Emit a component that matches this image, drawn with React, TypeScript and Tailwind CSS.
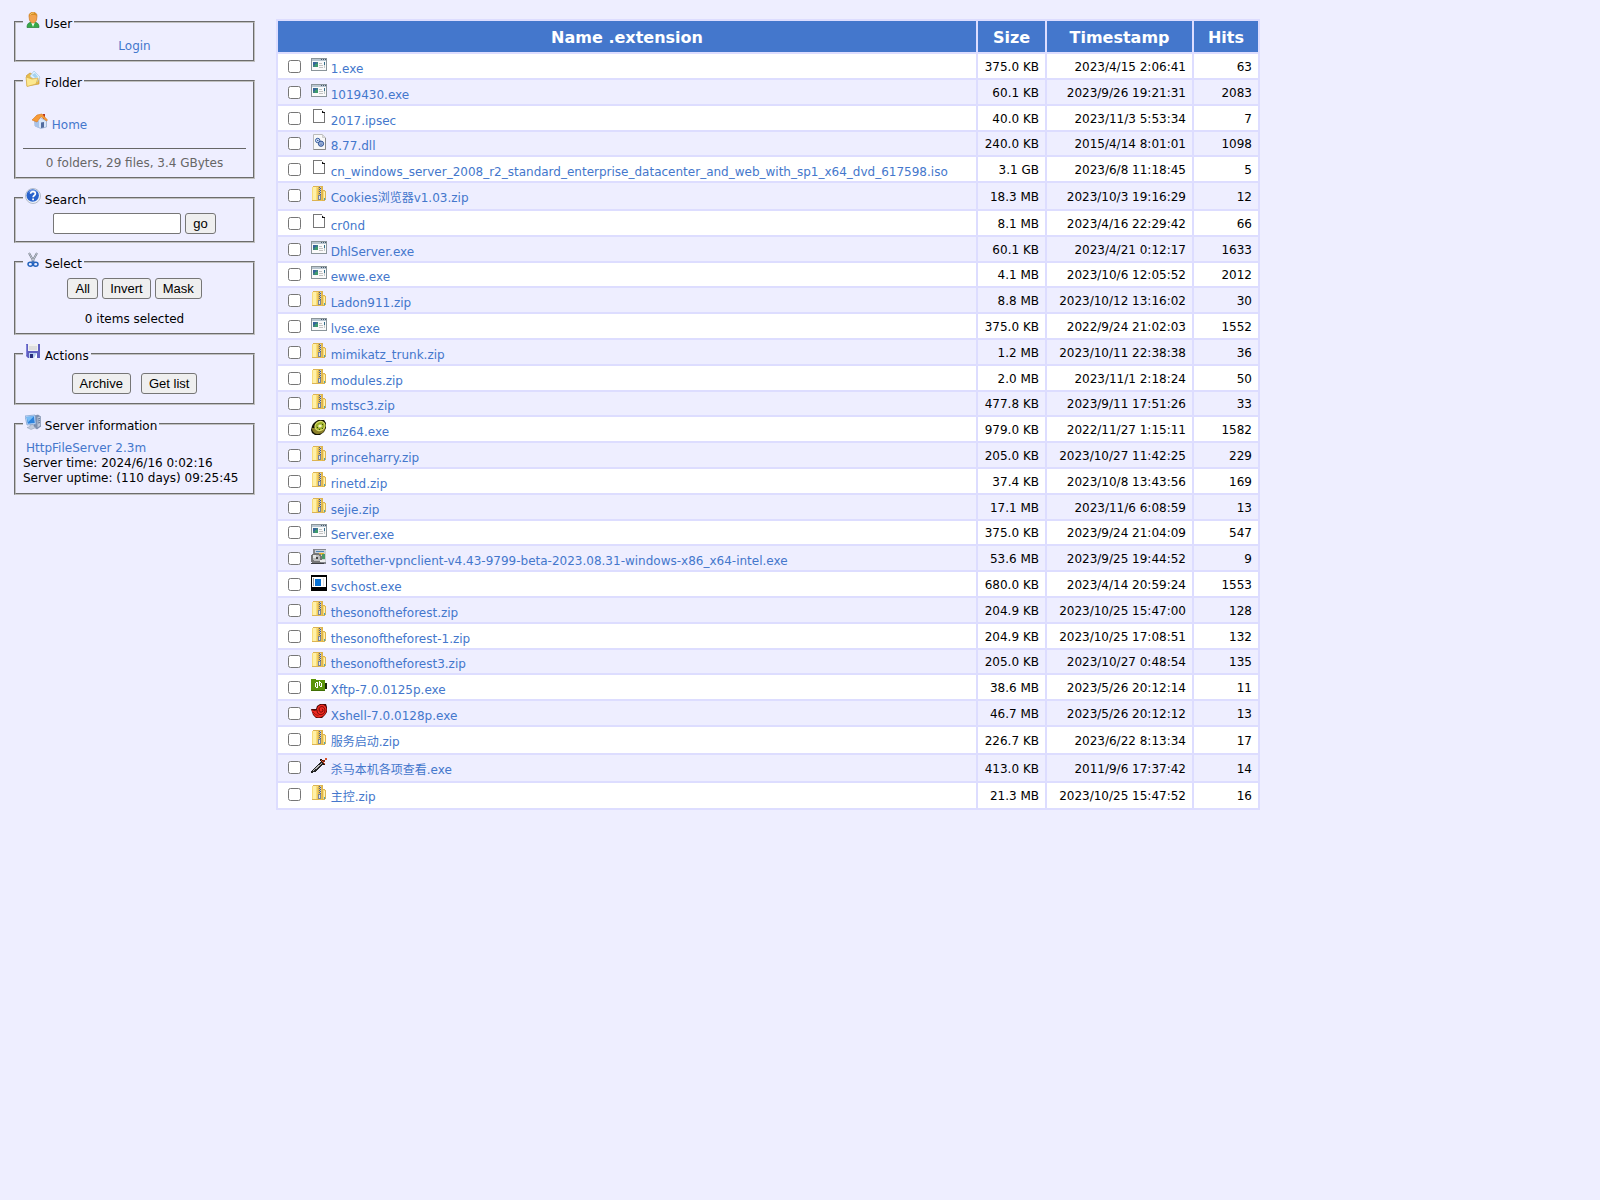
import { useState, type ReactNode } from "react";

type IconName =
  | "exe"
  | "file"
  | "dll"
  | "zip"
  | "kiwi"
  | "setup"
  | "console"
  | "xftp"
  | "xshell"
  | "sword"
  | "user"
  | "folder"
  | "home"
  | "search"
  | "select"
  | "actions"
  | "server";

const shapes: Record<IconName, ReactNode> = {
  exe: (
    <g shapeRendering="crispEdges">
      <path d="M0 1h16v13H0z" fill="#8a9499" />
      <path d="M1 2h14v2H1z" fill="#b9c6d0" />
      <path d="M10 2h1v1h-1zM12 2h1v1h-1zM14 2h1v1h-1z" fill="#46586a" />
      <path d="M1 4h14v9H1z" fill="#fafafa" />
      <path d="M2 5h5v5H2z" fill="#3d7f86" />
      <path d="M2 5h3v3H2z" fill="#37649a" />
      <path d="M4 7h3v3H4z" fill="#3f9a6c" />
      <path d="M8 6h3v1H8zM8 8h4v1H8zM8 10h4v1H8z" fill="#c3c3c3" />
      <path d="M13 5h1v3h-1z" fill="#336d88" />
      <path d="M13 8h1v3h-1z" fill="#c5cdcd" />
    </g>
  ),
  file: (
    <g shapeRendering="crispEdges">
      <path d="M2 0h9v1h1v1h1v1h1v11H2z" fill="#777" />
      <path d="M3 1h8v3h2v9H3z" fill="#fff" />
      <path d="M11 1h1v1h-1zM12 2h1v1h-1z" fill="#ddd" />
      <path d="M11 2h1v1h2v1h-3z" fill="#111" />
    </g>
  ),
  dll: (
    <>
      <path d="M2.5.5h9l3 3v12h-12z" fill="#f8f8f8" stroke="#bbb" />
      <path d="M14.5 4v11.5h-12" fill="none" stroke="#888" />
      <path d="M11.5.5v3h3" fill="#ddd" stroke="#ccc" />
      <circle cx="6.7" cy="6.5" r="2.2" fill="#dce8fb" stroke="#335a9c" />
      <circle cx="10" cy="9.7" r="2.6" fill="#a9c3ee" stroke="#2b4c8c" />
      <circle cx="6.7" cy="6.5" r=".8" fill="#335a9c" />
      <circle cx="10" cy="9.7" r=".9" fill="#fff" stroke="#2b4c8c" strokeWidth=".6" />
    </>
  ),
  zip: (
    <g shapeRendering="crispEdges">
      <path d="M1 1h1V0h10v4h2v1h1v9h-1v1H1z" fill="#dcb352" />
      <path d="M1 1h6v13H1z" fill="#f8dd7a" />
      <path d="M2 1h3v13H2z" fill="#fff0a6" />
      <path d="M6 2h1v12H6z" fill="#f2cc58" />
      <path d="M8 1h3v14H8z" fill="#e9c04b" />
      <path d="M12 5h2v9h-2z" fill="#f9dd75" />
      <path d="M13 6h1v7h-1z" fill="#fff2b4" />
      <path d="M8 1h1v1H8zM8 3h1v1H8zM8 5h1v1H8zM8 7h1v1H8zM9 2h1v1H9zM9 4h1v1H9zM9 6h1v1H9zM9 8h1v1H9z" fill="#4f5f86" />
      <path d="M9 1h1v1H9zM9 3h1v1H9zM9 5h1v1H9zM9 7h1v1H9z" fill="#c3cde0" />
      <path d="M7 9h3v5H7z" fill="#7a849b" />
      <path d="M8 10h1v3H8z" fill="#e0e5ee" />
      <path d="M13 12h1v2h-1z" fill="#4aa3b5" />
    </g>
  ),
  kiwi: (
    <>
      <path d="m2 4 2-2 3-2h6l2 3v5l-2 4-4 3H4l-3-2-1-3 1-4z" fill="#141404" />
      <path d="M1 8c0 4 3 6 6 6 4 0 7-3 7-6z" fill="#8c8129" />
      <ellipse cx="9" cy="6" rx="5.7" ry="5" fill="#d9dc6a" transform="rotate(-25 9 6)" />
      <ellipse cx="9" cy="6" rx="4.5" ry="3.7" fill="#9aae27" transform="rotate(-25 9 6)" />
      <ellipse cx="9" cy="6" rx="2.5" ry="1.8" fill="#c4cf62" transform="rotate(-25 9 6)" />
      <ellipse cx="9" cy="6" rx="1.5" ry="1" fill="#f8f6d0" />
      <path d="M6 7h1v1H6zM11 4h1v1h-1zM8 9h1v1H8zM11 8h1v1h-1z" fill="#3c4b10" />
    </>
  ),
  setup: (
    <g shapeRendering="crispEdges">
      <path d="M2 0h13v15H2z" fill="#85868c" />
      <path d="M4 1h11v12H4z" fill="#cdd0d6" />
      <path d="M5 2h8v1H5z" fill="#4a84b8" />
      <path d="M8 4h5v2H8z" fill="#e6b52f" />
      <path d="M11 5h3v5h-3z" fill="#4b9868" />
      <path d="M0 6h1V5h2V4h5v1h2v2h1v5h-1v2H1v-1H0z" fill="#777" />
      <path d="M2 6h6v1h1v5H3v-1H2z" fill="#bdbdbd" />
      <path d="M2 6h3v3H2z" fill="#e4e4e4" />
      <path d="M5 8h2v2H5z" fill="#444" />
      <path d="M0 14h13v1H0z" fill="#3d3f44" />
      <path d="M9 11h5v2H9z" fill="#eee" />
    </g>
  ),
  console: (
    <g shapeRendering="crispEdges">
      <path d="M0 0h16v16H0z" fill="#000" />
      <path d="M1 2h14v10H1z" fill="#fff" />
      <path d="M2 3h1v8H2z" fill="#999" />
      <path d="M4 4h6v7H4z" fill="#0872d4" />
      <path d="M12 3h1v8h-1z" fill="#ddd" />
    </g>
  ),
  xftp: (
    <g shapeRendering="crispEdges">
      <path d="M0 1h5v1h9v11H0z" fill="#5a9408" />
      <path d="M0 12h14v1H0z" fill="#406f05" />
      <path d="M14 5h2v6h-2z" fill="#16240a" />
      <path d="M5 4h2v1H5zM4 5h1v4H4zM5 9h1v1H5zM6 5h1v5H6zM8 3h1v5H8zM9 8h1v1H9zM9 4h1v1H9zM10 5h1v4h-1z" fill="#fff" />
    </g>
  ),
  xshell: (
    <>
      <path d="M0 5h5l1-3 3-2h6l1 3v5l-2 3-3 3H5l-3-3z" fill="#4d0805" />
      <path d="M.5 6c2 1 4 1 5.500 0C6 3 8 .7 11 .7S15.500 3 15.500 6 12 13.500 7.500 13.500C4 13.500 2 10 .5 6z" fill="#f02a22" />
      <path d="M6 6c0 3.500 2 5 4.500 4.500C13.500 10 14.500 7 13.500 4.500 12.500 2 9 2 8.200 4.500 7.700 7 9 8.500 10.800 8 12.500 7.500 12.300 5 10.800 5" fill="none" stroke="#6e0906" />
      <path d="M2 8c1.500 2 3 3 5.500 3.500" fill="none" stroke="#7c0c08" strokeWidth=".7" />
    </>
  ),
  sword: (
    <g shapeRendering="crispEdges">
      <path d="m0 15 1-3 9-8 2 2-8 8z" fill="#252525" />
      <path d="m2 13 9-8" stroke="#b5b5b5" />
      <path d="M9 1h2v1h1v1h1v2h1v2h-2V5h-1V4h-1V3H9z" fill="#2a1410" />
      <path d="M10 2h1v1h-1zM11 3h1v1h-1zM12 4h1v1h-1zM13 5h1v1h-1z" fill="#e0502a" />
      <path d="M12 2h2v2h-2z" fill="#812611" />
      <path d="M14 0h2v2h-2z" fill="#d9542a" />
    </g>
  ),
  user: (
    <>
      <path d="M2 15.500c0-4 2-5.500 6-5.500s6 1.500 6 5.500z" fill="#37a948" stroke="#267c35" strokeWidth=".7" />
      <path d="m6 10 2 5 2-5z" fill="#f4fff1" />
      <path d="M4 4c0-5 8-5 8 0l-.5 4C10 12 6 12 4.500 8z" fill="#f2a34e" stroke="#c97a23" strokeWidth=".7" />
      <path d="M4 4c0-5 8-5 8 0L10 3H6z" fill="#d78d24" />
      <path d="M5 3c1-2 3-2 4-2" fill="none" stroke="#f3c76a" />
    </>
  ),
  folder: (
    <>
      <path d="M1.500 4.500 5 2l2 1 5 1 2 2v7l-12 2z" fill="#e9bd4c" stroke="#c59639" strokeWidth=".7" />
      <path d="m5 5 4-5 6 6-3 5z" fill="#e1f2ff" stroke="#a5c8e6" strokeWidth=".7" />
      <path d="m7 4 3-2 3 4-3 1z" fill="#a4d2f0" />
      <path d="m1 6 6 2 6-1-2 6-9 2.500z" fill="#fce890" stroke="#d8ad4a" strokeWidth=".7" />
    </>
  ),
  home: (
    <>
      <path d="M2.500 7 8 4.500 14.500 8v6L9 15.500 3 13z" fill="#d8e6f9" stroke="#91a8cc" strokeWidth=".7" />
      <path d="M3 7v6l4 2V8z" fill="#a9c3e9" />
      <path d="M11 1h2v5h-2z" fill="#b83424" />
      <path d="m0 7 5-5 5-1 5.500 6-1 1L9 3.500 5 9z" fill="#f79b37" stroke="#d37722" strokeWidth=".6" />
      <path d="M9 9.500 12 9v5.500L9 15z" fill="#526b9e" />
    </>
  ),
  search: (
    <>
      <circle cx="8" cy="8" r="7.5" fill="#edf2fa" stroke="#a4adbd" strokeWidth=".8" />
      <circle cx="7.7" cy="7.5" r="6.2" fill="#2862cc" />
      <path d="M3 5c2-4 7-4 9-1-3-1-6-1-9 1z" fill="#729be9" />
      <path d="M5.600 5.800c0-3 4.800-2.700 4.800 0 0 1.700-2.300 1.700-2.300 3.500" fill="none" stroke="#fff" strokeWidth="1.7" />
      <path d="M7.200 10.500h1.800v1.700H7.200z" fill="#fff" />
    </>
  ),
  select: (
    <>
      <path d="m4 1 5 9M12 1l-5 9" stroke="#6f7885" strokeWidth="2" />
      <path d="m4 1 5 9M12 1l-5 9" stroke="#d8dde5" strokeWidth=".8" />
      <ellipse cx="5.3" cy="12.2" rx="2.3" ry="2" fill="none" stroke="#2463bd" strokeWidth="1.5" />
      <ellipse cx="10.7" cy="12.2" rx="2.3" ry="2" fill="none" stroke="#2463bd" strokeWidth="1.5" />
      <path d="m7 10 1-2 1 2-1 1z" fill="#2463bd" />
    </>
  ),
  actions: (
    <>
      <path d="M1 0h14v14H3l-2-2z" fill="#5f5fc0" />
      <path d="M3 0h10v7H3z" fill="#f0f0f0" />
      <path d="M4 3h8M4 5h8" stroke="#bbb" strokeWidth=".7" />
      <path d="M4 9h8v5H4z" fill="#b9d0f1" />
      <path d="M5 10h3v4H5z" fill="#292e7d" />
      <path d="m9 14 3-5v5z" fill="#fff" />
      <path d="M1.500.5v11" stroke="#8382dc" />
    </>
  ),
  server: (
    <>
      <path d="m9 2 4-1 3 2v9l-4 3-3-2z" fill="#7e8fad" stroke="#687b9d" strokeWidth=".6" />
      <path d="m12.500 3 3-.5v9l-3 2z" fill="#bac6da" />
      <path d="m13 5 2-.5M13 7l2-.5M13 9l2-.5" stroke="#657896" />
      <path d="m0 2 10-1 1 9-9 1z" fill="#c5ddfb" stroke="#799ccc" strokeWidth=".7" />
      <path d="m1.500 3 7.500-.7.8 6.600-7 .8z" fill="#2e83dc" />
      <path d="m1.500 3 7.500-.7-6 6z" fill="#78bdf6" />
      <path d="m5 11 3-.5 1 2 2 1-5 2-4-2 3-1z" fill="#c2cbdc" stroke="#8998b0" strokeWidth=".5" />
    </>
  ),
};

function Icon({ name }: { name: IconName }) {
  return (
    <svg viewBox="0 0 16 16" className="inline-block h-4 w-4 align-baseline" aria-hidden="true">
      {shapes[name]}
    </svg>
  );
}

type FileRow = { name: string; icon: IconName; size: string; time: string; hits: number };

const files: FileRow[] = [
  { name: "1.exe", icon: "exe", size: "375.0 KB", time: "2023/4/15 2:06:41", hits: 63 },
  { name: "1019430.exe", icon: "exe", size: "60.1 KB", time: "2023/9/26 19:21:31", hits: 2083 },
  { name: "2017.ipsec", icon: "file", size: "40.0 KB", time: "2023/11/3 5:53:34", hits: 7 },
  { name: "8.77.dll", icon: "dll", size: "240.0 KB", time: "2015/4/14 8:01:01", hits: 1098 },
  {
    name: "cn_windows_server_2008_r2_standard_enterprise_datacenter_and_web_with_sp1_x64_dvd_617598.iso",
    icon: "file",
    size: "3.1 GB",
    time: "2023/6/8 11:18:45",
    hits: 5,
  },
  { name: "Cookies浏览器v1.03.zip", icon: "zip", size: "18.3 MB", time: "2023/10/3 19:16:29", hits: 12 },
  { name: "cr0nd", icon: "file", size: "8.1 MB", time: "2023/4/16 22:29:42", hits: 66 },
  { name: "DhlServer.exe", icon: "exe", size: "60.1 KB", time: "2023/4/21 0:12:17", hits: 1633 },
  { name: "ewwe.exe", icon: "exe", size: "4.1 MB", time: "2023/10/6 12:05:52", hits: 2012 },
  { name: "Ladon911.zip", icon: "zip", size: "8.8 MB", time: "2023/10/12 13:16:02", hits: 30 },
  { name: "lvse.exe", icon: "exe", size: "375.0 KB", time: "2022/9/24 21:02:03", hits: 1552 },
  { name: "mimikatz_trunk.zip", icon: "zip", size: "1.2 MB", time: "2023/10/11 22:38:38", hits: 36 },
  { name: "modules.zip", icon: "zip", size: "2.0 MB", time: "2023/11/1 2:18:24", hits: 50 },
  { name: "mstsc3.zip", icon: "zip", size: "477.8 KB", time: "2023/9/11 17:51:26", hits: 33 },
  { name: "mz64.exe", icon: "kiwi", size: "979.0 KB", time: "2022/11/27 1:15:11", hits: 1582 },
  { name: "princeharry.zip", icon: "zip", size: "205.0 KB", time: "2023/10/27 11:42:25", hits: 229 },
  { name: "rinetd.zip", icon: "zip", size: "37.4 KB", time: "2023/10/8 13:43:56", hits: 169 },
  { name: "sejie.zip", icon: "zip", size: "17.1 MB", time: "2023/11/6 6:08:59", hits: 13 },
  { name: "Server.exe", icon: "exe", size: "375.0 KB", time: "2023/9/24 21:04:09", hits: 547 },
  {
    name: "softether-vpnclient-v4.43-9799-beta-2023.08.31-windows-x86_x64-intel.exe",
    icon: "setup",
    size: "53.6 MB",
    time: "2023/9/25 19:44:52",
    hits: 9,
  },
  { name: "svchost.exe", icon: "console", size: "680.0 KB", time: "2023/4/14 20:59:24", hits: 1553 },
  { name: "thesonoftheforest.zip", icon: "zip", size: "204.9 KB", time: "2023/10/25 15:47:00", hits: 128 },
  { name: "thesonoftheforest-1.zip", icon: "zip", size: "204.9 KB", time: "2023/10/25 17:08:51", hits: 132 },
  { name: "thesonoftheforest3.zip", icon: "zip", size: "205.0 KB", time: "2023/10/27 0:48:54", hits: 135 },
  { name: "Xftp-7.0.0125p.exe", icon: "xftp", size: "38.6 MB", time: "2023/5/26 20:12:14", hits: 11 },
  { name: "Xshell-7.0.0128p.exe", icon: "xshell", size: "46.7 MB", time: "2023/5/26 20:12:12", hits: 13 },
  { name: "服务启动.zip", icon: "zip", size: "226.7 KB", time: "2023/6/22 8:13:34", hits: 17 },
  { name: "杀马本机各项查看.exe", icon: "sword", size: "413.0 KB", time: "2011/9/6 17:37:42", hits: 14 },
  { name: "主控.zip", icon: "zip", size: "21.3 MB", time: "2023/10/25 15:47:52", hits: 16 },
];

function Panel({ icon, title, children }: { icon: IconName; title: string; children: ReactNode }) {
  return (
    <fieldset className="border-2 border-[#c0c0c0] px-[7px] pb-[7px] [border-style:groove]">
      <legend className="px-0.5">
        <Icon name={icon} /> {title}
      </legend>
      {children}
    </fieldset>
  );
}

function Button({ children, onClick }: { children: ReactNode; onClick?: () => void }) {
  return (
    <button
      type="button"
      onClick={onClick}
      className="h-[21px] min-w-[31px] rounded-[3px] border border-[#767676] bg-[#efefef] px-[7px] font-['Liberation_Sans',sans-serif] text-[13px] leading-[15px] hover:bg-[#e5e5e5]"
    >
      {children}
    </button>
  );
}

const linkClass = "px-[3px] text-[#4477cc] hover:underline";
const thClass = "border-2 border-[#ddddff] pt-[7px] pb-[5px] text-base leading-[19px] font-bold";
const tdClass = "border-2 border-[#ddddff] px-1.5 pt-[3px] pb-0.5 group-nth-[5n+4]:pt-0.5";

// Chinese names get a little more room under the baseline
const hasHan = (name: string) => /[\u4e00-\u9fff]/.test(name);

export default function App() {
  const [selected, setSelected] = useState<string[]>([]);

  const toggle = (name: string) =>
    setSelected((s) => (s.includes(name) ? s.filter((n) => n !== name) : [...s, name]));

  return (
    <div className="flex min-h-screen items-start gap-[21px] bg-[#eeeeff] px-3.5 pt-3 pb-4 font-['DejaVu_Sans','Noto_Sans_CJK_SC',sans-serif] text-[12px] leading-[normal] text-black">
      <aside className="flex w-[241px] shrink-0 flex-col gap-[9px]">
        <Panel icon="user" title="User">
          <div className="pt-2 text-center">
            <a href="#login" className={linkClass}>
              Login
            </a>
          </div>
        </Panel>

        <Panel icon="folder" title="Folder">
          <div className="px-1.5 pt-[23px] pb-4">
            <a href="#home" className={linkClass}>
              <Icon name="home" /> Home
            </a>
          </div>
          <div className="border-t border-[#666666] pt-[7px] text-center text-[#666666]">
            0 folders, 29 files, 3.4 GBytes
          </div>
        </Panel>

        <Panel icon="search" title="Search">
          <form className="flex justify-center gap-1 pt-1.5" onSubmit={(e) => e.preventDefault()}>
            <input
              type="text"
              aria-label="Search"
              className="h-[21px] w-32 rounded-[2px] border border-[#767676] bg-white px-1"
            />
            <Button>go</Button>
          </form>
        </Panel>

        <Panel icon="select" title="Select">
          <div className="flex justify-center gap-1 pt-[7px]">
            <Button onClick={() => setSelected(files.map((f) => f.name))}>All</Button>
            <Button
              onClick={() =>
                setSelected(files.map((f) => f.name).filter((n) => !selected.includes(n)))
              }
            >
              Invert
            </Button>
            <Button>Mask</Button>
          </div>
          <div className="pt-[13px] text-center">{selected.length} items selected</div>
        </Panel>

        <Panel icon="actions" title="Actions">
          <div className="flex justify-center gap-2.5 pt-2.5 pb-0.5">
            <Button>Archive</Button>
            <Button>Get list</Button>
          </div>
        </Panel>

        <Panel icon="server" title="Server information">
          <div className="pt-2 leading-[15px]">
            <a href="#hfs" className={linkClass}>
              HttpFileServer 2.3m
            </a>
            <div>Server time: 2024/6/16 0:02:16</div>
            <div className="whitespace-nowrap">Server uptime: (110 days) 09:25:45</div>
          </div>
        </Panel>
      </aside>

      <table className="mt-[7px] border-collapse whitespace-nowrap">
        <thead>
          <tr className="bg-[#4477cc] text-white">
            <th className={`${thClass} w-[700px]`}>Name .extension</th>
            <th className={`${thClass} w-[69px]`}>Size</th>
            <th className={`${thClass} w-[147px]`}>Timestamp</th>
            <th className={`${thClass} w-[66px]`}>Hits</th>
          </tr>
        </thead>
        <tbody>
          {files.map((f) => (
            <tr key={f.name} className="group odd:bg-white even:bg-[#eeeeff]">
              <td className={tdClass}>
                <div className={hasHan(f.name) ? "pb-0.5" : undefined}>
                  <input
                    type="checkbox"
                    aria-label={f.name}
                    checked={selected.includes(f.name)}
                    onChange={() => toggle(f.name)}
                    className="mt-[3px] mr-[3px] mb-[3px] ml-1 h-[13px] w-[13px] align-baseline"
                  />{" "}
                  <a href={`#${f.name}`} className={linkClass}>
                    <Icon name={f.icon} /> {f.name}
                  </a>
                </div>
              </td>
              <td className={`${tdClass} text-right`}>{f.size}</td>
              <td className={`${tdClass} text-right`}>{f.time}</td>
              <td className={`${tdClass} text-right`}>{f.hits}</td>
            </tr>
          ))}
        </tbody>
      </table>
    </div>
  );
}
